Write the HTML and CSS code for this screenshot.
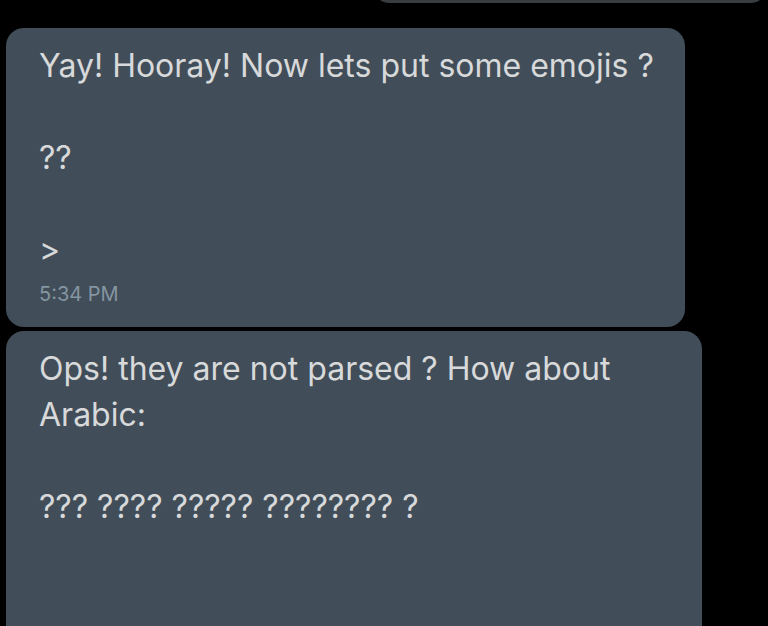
FILE: index.html
```html
<!DOCTYPE html>
<html lang="en">

<head>
    <meta charset="UTF-8">
    <meta name="viewport" content="width=device-width, initial-scale=1.0">
    <title>Chat</title>
    <link rel="stylesheet" href="styles.css">
</head>

<body>
    <div class="chat">
        <div class="bubble outgoing"></div>

        <div class="bubble incoming">
            <div class="bubble-text">Yay! Hooray! Now lets put some emojis ?

??

&gt;</div>
            <div class="bubble-time">5:34 PM</div>
        </div>

        <div class="bubble incoming tall">
            <div class="bubble-text">Ops! they are not parsed ? How about Arabic:

??? ???? ????? ???????? ?</div>
        </div>
    </div>
</body>

</html>
```

FILE: styles.css
```css
body {
    margin: 0;
    background-color: #000;
    font-family: Inter, "Noto Sans", sans-serif;
    overflow: hidden;
}

.chat {
    display: flex;
    flex-direction: column;
    gap: 4px;
    padding-left: 6px;
}

.bubble {
    border-radius: 18px;
    box-sizing: border-box;
}

/* previous message, mostly scrolled away */
.bubble.outgoing {
    align-self: flex-end;
    width: 396px;
    height: 60px;
    margin-top: -57px;
    margin-bottom: 21px;
    background-color: #3a3d40;
}

.bubble.incoming {
    align-self: flex-start;
    width: fit-content;
    max-width: 696px;
    padding: 15px 31px 21px 33px;
    background-color: #414e59;
}

.bubble.tall {
    width: 696px;
    min-height: 340px;
}

.bubble-text {
    font-size: 32px;
    line-height: 46px;
    color: #d8d9da;
    white-space: pre-wrap;
}

.bubble-time {
    margin-top: 9px;
    font-size: 20px;
    line-height: 24px;
    color: #8595a1;
}
```
